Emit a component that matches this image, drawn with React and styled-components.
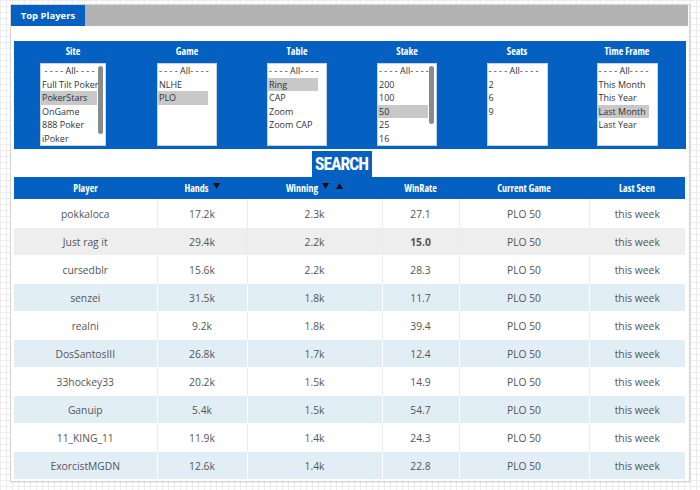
import styled, { createGlobalStyle } from "styled-components";

const BLUE = "#0461c1";

const filters = [
  { label: "Site", width: 66, shift: 8, scroll: [2, 68], items: ["Full Tilt Poker", "PokerStars", "OnGame", "888 Poker", "iPoker"], selected: "PokerStars" },
  { label: "Game", width: 60, items: ["NLHE", "PLO"], selected: "PLO" },
  { label: "Table", width: 60, items: ["Ring", "CAP", "Zoom", "Zoom CAP"], selected: "Ring" },
  { label: "Stake", width: 60, scroll: [2, 58], items: ["200", "100", "50", "25", "16"], selected: "50" },
  { label: "Seats", width: 61, items: ["2", "6", "9"] },
  { label: "Time Frame", width: 61, items: ["This Month", "This Year", "Last Month", "Last Year"], selected: "Last Month" },
];

const rows = [
  ["pokkaloca", "17.2k", "2.3k", "27.1"],
  ["Just rag it", "29.4k", "2.2k", "15.0"],
  ["cursedblr", "15.6k", "2.2k", "28.3"],
  ["senzei", "31.5k", "1.8k", "11.7"],
  ["realni", "9.2k", "1.8k", "39.4"],
  ["DosSantosIII", "26.8k", "1.7k", "12.4"],
  ["33hockey33", "20.2k", "1.5k", "14.9"],
  ["Ganuip", "5.4k", "1.5k", "54.7"],
  ["11_KING_11", "11.9k", "1.4k", "24.3"],
  ["ExorcistMGDN", "12.6k", "1.4k", "22.8"],
];

const GlobalStyle = createGlobalStyle`
  html, body { margin: 0; padding: 0; }
  body {
    width: 700px;
    height: 490px;
    overflow: hidden;
    background-color: #fff;
    background-image:
      linear-gradient(#ececec 1px, transparent 1px),
      linear-gradient(90deg, #ececec 1px, transparent 1px);
    background-size: 6px 6px;
    font-family: "Open Sans", sans-serif;
  }
`;

const Panel = styled.div`
  margin: 4px 0 0 10px;
  width: 678px;
  background: #fff;
  border: 1px solid #d4d4d4;
  box-shadow: 1px 1px 1px rgba(0, 0, 0, 0.06);
  padding-bottom: 2px;
`;

const TabBar = styled.div`
  display: flex;
  height: 21px;
  margin-right: 1px;
  background: #b3b3b3;
`;

const Tab = styled.div`
  width: 74px;
  background: ${BLUE};
  color: #fff;
  font-size: 9.5px;
  font-weight: 700;
  display: flex;
  align-items: center;
  justify-content: center;
`;

const Content = styled.div`
  padding: 15px 3px 0;
`;

const FilterBox = styled.div`
  display: grid;
  grid-template-columns: repeat(6, 110px);
  background: ${BLUE};
  padding: 3px 3px 3px 8px;
`;

const FilterCol = styled.div`
  display: flex;
  flex-direction: column;
  align-items: center;
  margin-right: ${(p) => p.$shift || 0}px;
`;

const Label = styled.div`
  color: #fff;
  font-stretch: 86%;
  font-size: 10px;
  font-weight: 700;
  line-height: 14px;
  margin-bottom: 5px;
`;

const ListBox = styled.div`
  position: relative;
  width: ${(p) => p.$w}px;
  height: 83px;
  box-sizing: border-box;
  background: #fff;
  border: 1px solid #c9d3de;
  overflow: hidden;
`;

const Option = styled.div`
  font-size: 9px;
  line-height: 13.6px;
  height: 13.6px;
  color: #333;
  padding-left: 1px;
  margin-right: 8px;
  white-space: nowrap;
  text-align: ${(p) => (p.$center ? "center" : "left")};
  background: ${(p) => (p.$selected ? "#c8c8c8" : "transparent")};
`;

const Scroll = styled.div`
  position: absolute;
  right: 2px;
  width: 5px;
  border-radius: 3px;
  background: #8a8a8a;
`;

const SearchRow = styled.div`
  display: flex;
  justify-content: center;
  padding-right: 17px;
  height: 28px;
`;

const SearchButton = styled.button`
  margin-top: 2px;
  width: 60px;
  height: 26px;
  border: none;
  padding: 0;
  background: ${BLUE};
  color: #fff;
  font-family: "Roboto", sans-serif;
  font-stretch: 75%;
  font-weight: 700;
  font-size: 17.5px;
  letter-spacing: -1px;
  cursor: pointer;
`;

const Table = styled.table`
  width: 671px;
  border-collapse: collapse;
  table-layout: fixed;
`;

const Th = styled.th`
  height: 22px;
  padding: 0;
  background: ${BLUE};
  color: #fff;
  font-stretch: 86%;
  font-size: 10px;
  font-weight: 700;
  text-align: center;
  white-space: nowrap;
`;

const SortIcon = styled.svg`
  width: 7px;
  height: 6px;
  vertical-align: 3px;
  margin-left: ${(p) => p.$gap}px;
`;

const Sort = ({ up, gap = 4 }) => (
  <SortIcon viewBox="0 0 7 6" $gap={gap}>
    <path d={up ? "M0 6 L3.5 0 L7 6 Z" : "M0 0 L7 0 L3.5 6 Z"} fill="#111" />
  </SortIcon>
);

const Row = styled.tr`
  background: ${(p) => (p.$tone === "blue" ? "#e2eef5" : p.$tone === "gray" ? "#eeeeee" : "#fff")};
  border-top: 1px solid #fff;
`;

const Td = styled.td`
  height: 27px;
  padding: 0;
  font-size: 10.3px;
  color: #555;
  text-align: center;
  font-weight: ${(p) => (p.$bold ? 700 : 400)};
  border-left: 1px solid ${(p) => (p.$tone === "blue" ? "#fff" : "#e3eff5")};
  &:first-child { border-left: none; }
`;

const widths = [143, 90, 135, 77, 130, 96];

const toneOf = (i) => (i === 1 ? "gray" : i % 2 === 1 ? "blue" : "white");

export default function App() {
  return (
    <>
      <GlobalStyle />
      <Panel>
        <TabBar>
          <Tab>Top Players</Tab>
        </TabBar>
        <Content>
          <FilterBox>
            {filters.map((f) => (
              <FilterCol key={f.label} $shift={f.shift}>
                <Label>{f.label}</Label>
                <ListBox $w={f.width}>
                  <Option $center>- - - - All- - - -</Option>
                  {f.items.map((it) => (
                    <Option key={it} $selected={it === f.selected}>
                      {it}
                    </Option>
                  ))}
                  {f.scroll && (
                    <Scroll style={{ top: f.scroll[0], height: f.scroll[1] }} />
                  )}
                </ListBox>
              </FilterCol>
            ))}
          </FilterBox>
          <SearchRow>
            <SearchButton>SEARCH</SearchButton>
          </SearchRow>
          <Table>
            <colgroup>
              {widths.map((w, i) => (
                <col key={i} style={{ width: w }} />
              ))}
            </colgroup>
            <thead>
              <tr>
                <Th>Player</Th>
                <Th>
                  Hands<Sort />
                </Th>
                <Th>
                  Winning<Sort />
                  <Sort up gap={7} />
                </Th>
                <Th>WinRate</Th>
                <Th>Current Game</Th>
                <Th>Last Seen</Th>
              </tr>
            </thead>
            <tbody>
              {rows.map((r, i) => {
                const tone = toneOf(i);
                return (
                  <Row key={r[0]} $tone={tone}>
                    <Td $tone={tone}>{r[0]}</Td>
                    <Td $tone={tone}>{r[1]}</Td>
                    <Td $tone={tone}>{r[2]}</Td>
                    <Td $tone={tone} $bold={i === 1}>{r[3]}</Td>
                    <Td $tone={tone}>PLO 50</Td>
                    <Td $tone={tone}>this week</Td>
                  </Row>
                );
              })}
            </tbody>
          </Table>
        </Content>
      </Panel>
    </>
  );
}
